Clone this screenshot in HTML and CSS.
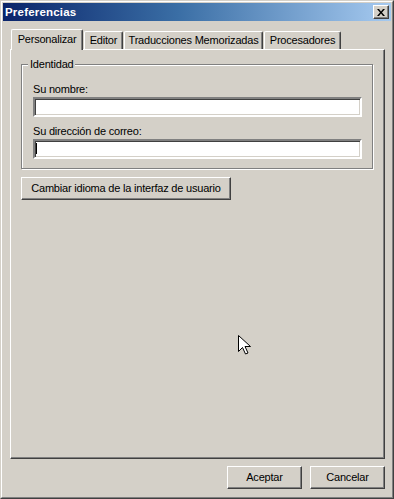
FILE: index.html
```html
<html>
    <head>
        <link rel="stylesheet" href="styles.css">
    </head>
    <body>
        <div class="window">
          <div class="frame">
            <!--title bar-->
            <div class="titlebar">
                <span class="title">Preferencias</span>
                <div class="closebtn">
                    <svg width="8" height="7" viewBox="0 0 8 7">
                        <path d="M0 0h2l2 2.5 2-2.5h2l-3 3.5 3 3.5h-2l-2-2.5-2 2.5h-2l3-3.5z" fill="#000"/>
                    </svg>
                </div>
            </div>

            <div class="content">
                <!--tabs-->
                <div class="tabs">
                    <div class="tab selected t-personal">Personalizar</div>
                    <div class="tab t-editor">Editor</div>
                    <div class="tab t-memo">Traducciones Memorizadas</div>
                    <div class="tab t-proc">Procesadores</div>
                </div>

                <div class="panel">
                    <div class="group">
                        <span class="group-title">Identidad</span>
                        <div class="field-label first">Su nombre:</div>
                        <div class="textbox"></div>
                        <div class="field-label">Su dirección de correo:</div>
                        <div class="textbox"><span class="caret"></span></div>
                    </div>
                    <div class="btn wide">Cambiar idioma de la interfaz de usuario</div>
                </div>

                <div class="buttons">
                    <div class="btn">Aceptar</div>
                    <div class="btn">Cancelar</div>
                </div>
            </div>
          </div>
          <!--mouse pointer-->
          <svg class="cursor" width="13" height="21" viewBox="0 0 13 21">
              <path d="M0.5 0.5v16l4-4 3 6.5 2.5-1-3-6.5h5.5z" fill="#fff" stroke="#000" stroke-width="1"/>
          </svg>
        </div>
    </body>
</html>
```

FILE: styles.css
```css
body{
    margin:0;
    font-family:"Liberation Sans", Arial, sans-serif;
    font-size:11px;
    letter-spacing:-0.2px;
    color:#000;
    background:#d4d0c8;}

/*outer window frame*/
.window{
    position:relative;
    width:394px;
    height:499px;
    box-sizing:border-box;
    border:1px solid;
    border-color:#d4d0c8 #404040 #404040 #d4d0c8;
    background:#d4d0c8;}

.frame{
    height:100%;
    box-sizing:border-box;
    border:1px solid;
    border-color:#fff #808080 #808080 #fff;
    padding:1px;
    display:flex;
    flex-direction:column;}

.titlebar{
    height:18px;
    display:flex;
    align-items:center;
    justify-content:space-between;
    background:linear-gradient(to right, #0a246a 0%, #3a6ea5 45%, #a6caf0 100%);}

.title{
    color:#fff;
    font-weight:bold;
    font-size:11.5px;
    letter-spacing:0.2px;
    padding-left:2px;
    line-height:18px;}

.closebtn{
    width:16px;
    height:14px;
    box-sizing:border-box;
    margin-right:2px;
    background:#d4d0c8;
    border:1px solid;
    border-color:#fff #404040 #404040 #fff;
    box-shadow:inset -1px -1px #808080;
    display:flex;
    align-items:center;
    justify-content:center;}

.content{
    flex:1;
    display:flex;
    flex-direction:column;
    padding:8px 6px 7px 7px;}

/*tab strip*/
.tabs{
    height:20px;
    display:flex;
    align-items:flex-end;
    padding-left:1px;}

.tab{
    height:18px;
    box-sizing:border-box;
    margin-right:1px;
    line-height:16px;
    text-align:center;
    border:1px solid;
    border-bottom:none;
    border-color:#fff #404040 #fff #fff;
    box-shadow:inset -1px 0 #808080;
    border-radius:2px 2px 0 0;
    background:#d4d0c8;
    white-space:nowrap;}

.tab.selected{
    height:21px;
    margin-bottom:-1px;
    position:relative;
    z-index:1;
    line-height:18px;}

.t-personal{width:72px;}
.t-editor{width:39px;}
.t-memo{width:139px;}
.t-proc{width:77px;}

.panel{
    flex:1;
    border:1px solid;
    border-color:#fff #404040 #404040 #fff;
    box-shadow:inset -1px -1px #808080;
    padding:14px 10px 0 10px;}

/*group box "Identidad"*/
.group{
    border:1px solid #808080;
    box-shadow:inset 1px 1px #fff, 1px 1px #fff;
    margin-right:1px;
    padding:0 10px 9px 11px;}

.group-title{
    display:inline-block;
    margin-top:-7px;
    margin-left:-5px;
    padding:0 2px;
    line-height:13px;
    background:#d4d0c8;
    vertical-align:top;}

.field-label{
    line-height:13px;
    margin-top:8px;}

.field-label.first{
    margin-top:12px;}

.textbox{
    height:20px;
    box-sizing:border-box;
    margin-top:1px;
    background:#fff;
    border:2px solid;
    border-color:#808080 #fff #fff #808080;
    box-shadow:inset 1px 1px #404040, inset -1px -1px #d4d0c8;
    padding:2px 1px;}

.caret{
    display:block;
    width:1px;
    height:11px;
    background:#000;}

/*push buttons*/
.btn{
    width:75px;
    height:23px;
    box-sizing:border-box;
    border:1px solid;
    border-color:#fff #404040 #404040 #fff;
    box-shadow:inset -1px -1px #808080;
    text-align:center;
    line-height:20px;
    background:#d4d0c8;}

.btn.wide{
    width:210px;
    margin-top:8px;}

.buttons{
    display:flex;
    justify-content:flex-end;
    gap:8px;
    margin-top:7px;}

.cursor{
    position:absolute;
    left:237px;
    top:334px;}
```
